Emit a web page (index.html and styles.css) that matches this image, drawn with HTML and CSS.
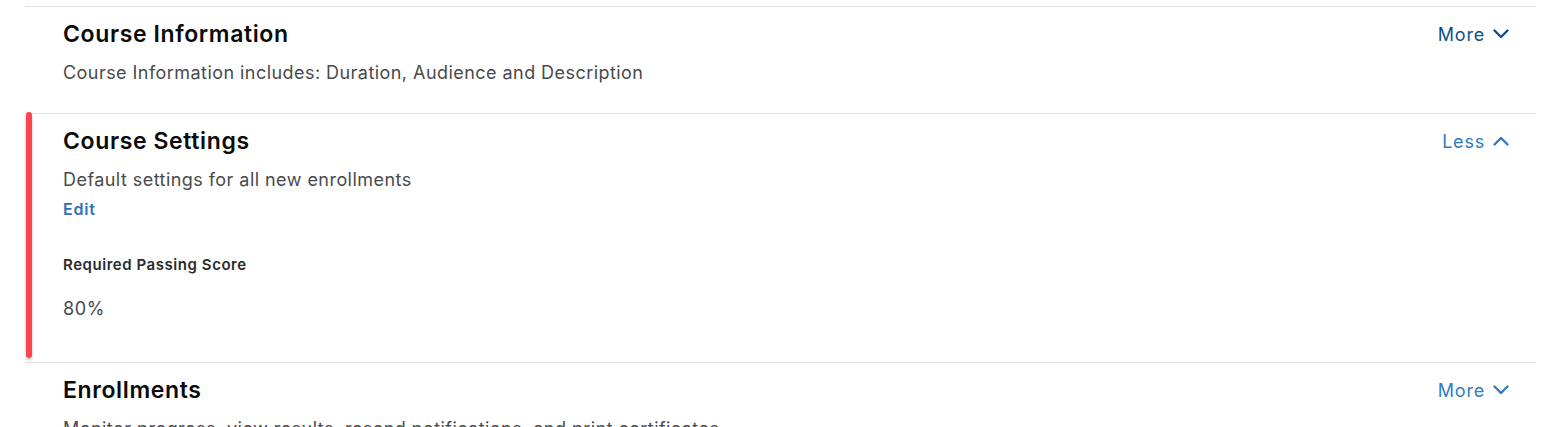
FILE: index.html
```html
<!DOCTYPE html>
<html lang="en">
<head>
<meta charset="utf-8">
<link rel="stylesheet" href="styles.css">
</head>
<body>
<div class="list">
  <section class="panel">
    <div class="panel-head">
      <h2 class="panel-title">Course Information</h2>
      <button class="toggle toggle-dark">More
        <svg class="chev" viewBox="0 0 16 10" width="16" height="10"><path d="M1.5 1.5 L8 8 L14.5 1.5" fill="none" stroke="currentColor" stroke-width="2.4" stroke-linecap="round" stroke-linejoin="round"/></svg>
      </button>
    </div>
    <p class="panel-desc">Course Information includes: Duration, Audience and Description</p>
  </section>
  <section class="panel panel-open">
    <div class="panel-head">
      <h2 class="panel-title">Course Settings</h2>
      <button class="toggle">Less
        <svg class="chev" viewBox="0 0 16 10" width="16" height="10"><path d="M1.5 8.5 L8 2 L14.5 8.5" fill="none" stroke="currentColor" stroke-width="2.4" stroke-linecap="round" stroke-linejoin="round"/></svg>
      </button>
    </div>
    <p class="panel-desc">Default settings for all new enrollments</p>
    <a class="edit" href="#">Edit</a>
    <div class="field">
      <div class="field-label">Required Passing Score</div>
      <div class="field-value">80%</div>
    </div>
  </section>
  <section class="panel">
    <div class="panel-head">
      <h2 class="panel-title">Enrollments</h2>
      <button class="toggle">More
        <svg class="chev" viewBox="0 0 16 10" width="16" height="10"><path d="M1.5 1.5 L8 8 L14.5 1.5" fill="none" stroke="currentColor" stroke-width="2.4" stroke-linecap="round" stroke-linejoin="round"/></svg>
      </button>
    </div>
    <p class="panel-desc">Monitor progress, view results, resend notifications, and print certificates</p>
  </section>
</div>
</body>
</html>
```
FILE: styles.css
```css
* { box-sizing: border-box; }
html, body { margin: 0; padding: 0; background: #fff; }
body {
  font-family: Inter, "Noto Sans", "Liberation Sans", sans-serif;
  color: #4a4a4a;
  overflow: hidden;
  height: 427px;
}
.list {
  padding-top: 6px;
  margin-left: 25px;
  width: 1511px;
}
.panel {
  position: relative;
  border-top: 1px solid #e3e3e3;
  padding: 15px 27px 28px 38px;
}
.panel-open { padding-bottom: 41px; }
.panel-open::before {
  content: "";
  position: absolute;
  left: 1px;
  top: -2px;
  bottom: 4px;
  width: 6px;
  border-radius: 3px;
  background: #ff444b;
  box-shadow: 0 2px 3px rgba(0,0,0,0.25);
}
.panel-head {
  display: flex;
  justify-content: space-between;
  align-items: center;
  height: 24px;
}
.panel-title {
  margin: 0;
  font-size: 23px;
  font-weight: 600;
  color: #0a0a0a;
  letter-spacing: 0.62px;
  line-height: 24px;
}
.toggle {
  display: flex;
  align-items: center;
  gap: 8px;
  border: 0;
  background: none;
  padding: 0;
  font-family: inherit;
  font-size: 18px;
  color: #2f7cc0;
  letter-spacing: 0.8px;
  cursor: pointer;
}
.toggle-dark { color: #0f4f88; }
.chev { display: block; }
.panel-desc {
  margin: 15px 0 0;
  font-size: 18px;
  line-height: 24px;
  letter-spacing: 0.45px;
  color: #4a4a4a;
}
.edit {
  display: inline-block;
  margin-top: 7px;
  font-size: 16px;
  font-weight: 600;
  color: #2f72b4;
  text-decoration: none;
  letter-spacing: 0.8px;
  line-height: 20px;
}
.field { margin-top: 36px; }
.field-label {
  font-size: 15px;
  font-weight: 600;
  color: #2a2a2a;
  letter-spacing: 0.55px;
  line-height: 20px;
}
.field-value {
  margin-top: 22px;
  font-size: 18px;
  letter-spacing: 0.6px;
  color: #444a55;
  line-height: 24px;
}
```
